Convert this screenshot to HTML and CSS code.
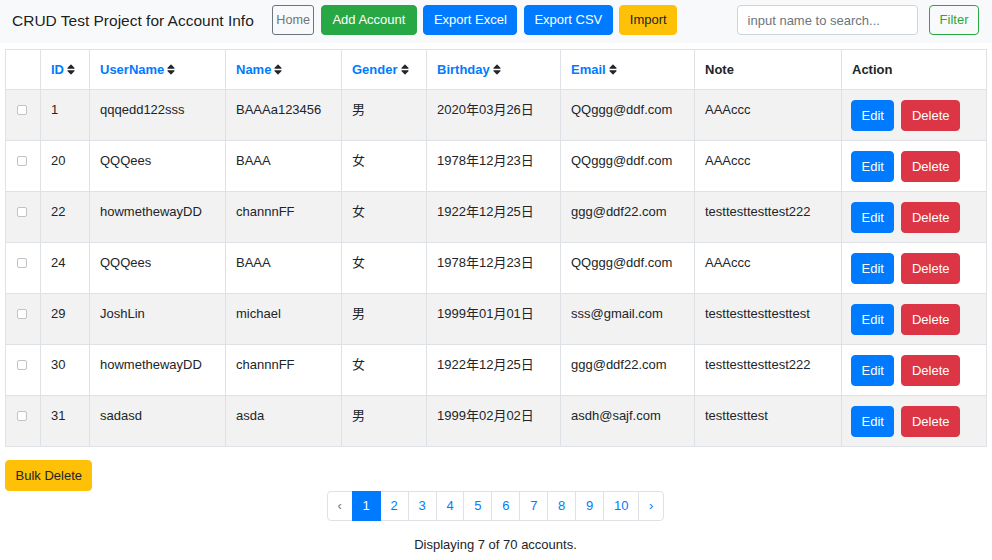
FILE: index.html
```html
<!DOCTYPE html>
<html lang="zh-Hant">
<head>
<meta charset="utf-8">
<title>CRUD Test Project for Account Info</title>
<link rel="stylesheet" href="styles.css">
</head>
<body>
<nav class="navbar">
  <span class="brand">CRUD Test Project for Account Info</span>
  <div class="nav-actions">
    <button class="btn btn-home">Home</button>
    <button class="btn btn-success btn-wide">Add Account</button>
    <button class="btn btn-primary">Export Excel</button>
    <button class="btn btn-primary">Export CSV</button>
    <button class="btn btn-warning">Import</button>
  </div>
  <form class="search">
    <input class="search-input" type="text" placeholder="input name to search...">
    <button class="btn btn-outline-success" type="button">Filter</button>
  </form>
</nav>

<main class="content">
  <table class="table">
    <colgroup>
      <col class="c-check"><col class="c-id"><col class="c-user"><col class="c-name"><col class="c-gender"><col class="c-birth"><col class="c-email"><col class="c-note"><col class="c-action">
    </colgroup>
    <thead>
      <tr>
        <th></th>
        <th><a class="sort-link">ID</a><svg class="sort" viewBox="0 0 320 512"><path d="M41 288h238c21.4 0 32.1 25.9 17 41L177 448c-9.4 9.4-24.6 9.4-33.9 0L24 329c-15.1-15.1-4.4-41 17-41zm255-105L177 64c-9.4-9.4-24.6-9.4-33.9 0L24 183c-15.1 15.1-4.4 41 17 41h238c21.4 0 32.1-25.9 17-41z"/></svg></th>
        <th><a class="sort-link">UserName</a><svg class="sort" viewBox="0 0 320 512"><path d="M41 288h238c21.4 0 32.1 25.9 17 41L177 448c-9.4 9.4-24.6 9.4-33.9 0L24 329c-15.1-15.1-4.4-41 17-41zm255-105L177 64c-9.4-9.4-24.6-9.4-33.9 0L24 183c-15.1 15.1-4.4 41 17 41h238c21.4 0 32.1-25.9 17-41z"/></svg></th>
        <th><a class="sort-link">Name</a><svg class="sort" viewBox="0 0 320 512"><path d="M41 288h238c21.4 0 32.1 25.9 17 41L177 448c-9.4 9.4-24.6 9.4-33.9 0L24 329c-15.1-15.1-4.4-41 17-41zm255-105L177 64c-9.4-9.4-24.6-9.4-33.9 0L24 183c-15.1 15.1-4.4 41 17 41h238c21.4 0 32.1-25.9 17-41z"/></svg></th>
        <th><a class="sort-link">Gender</a><svg class="sort" viewBox="0 0 320 512"><path d="M41 288h238c21.4 0 32.1 25.9 17 41L177 448c-9.4 9.4-24.6 9.4-33.9 0L24 329c-15.1-15.1-4.4-41 17-41zm255-105L177 64c-9.4-9.4-24.6-9.4-33.9 0L24 183c-15.1 15.1-4.4 41 17 41h238c21.4 0 32.1-25.9 17-41z"/></svg></th>
        <th><a class="sort-link">Birthday</a><svg class="sort" viewBox="0 0 320 512"><path d="M41 288h238c21.4 0 32.1 25.9 17 41L177 448c-9.4 9.4-24.6 9.4-33.9 0L24 329c-15.1-15.1-4.4-41 17-41zm255-105L177 64c-9.4-9.4-24.6-9.4-33.9 0L24 183c-15.1 15.1-4.4 41 17 41h238c21.4 0 32.1-25.9 17-41z"/></svg></th>
        <th><a class="sort-link">Email</a><svg class="sort" viewBox="0 0 320 512"><path d="M41 288h238c21.4 0 32.1 25.9 17 41L177 448c-9.4 9.4-24.6 9.4-33.9 0L24 329c-15.1-15.1-4.4-41 17-41zm255-105L177 64c-9.4-9.4-24.6-9.4-33.9 0L24 183c-15.1 15.1-4.4 41 17 41h238c21.4 0 32.1-25.9 17-41z"/></svg></th>
        <th>Note</th>
        <th>Action</th>
      </tr>
    </thead>
    <tbody>
      <tr>
        <td><input class="check" type="checkbox"></td>
        <td>1</td><td>qqqedd122sss</td><td>BAAAa123456</td><td>男</td><td>2020年03月26日</td><td>QQggg@ddf.com</td><td>AAAccc</td>
        <td><div class="actions"><button class="btn btn-primary btn-row">Edit</button><button class="btn btn-danger btn-row">Delete</button></div></td>
      </tr>
      <tr>
        <td><input class="check" type="checkbox"></td>
        <td>20</td><td>QQQees</td><td>BAAA</td><td>女</td><td>1978年12月23日</td><td>QQggg@ddf.com</td><td>AAAccc</td>
        <td><div class="actions"><button class="btn btn-primary btn-row">Edit</button><button class="btn btn-danger btn-row">Delete</button></div></td>
      </tr>
      <tr>
        <td><input class="check" type="checkbox"></td>
        <td>22</td><td>howmethewayDD</td><td>channnFF</td><td>女</td><td>1922年12月25日</td><td>ggg@ddf22.com</td><td>testtesttesttest222</td>
        <td><div class="actions"><button class="btn btn-primary btn-row">Edit</button><button class="btn btn-danger btn-row">Delete</button></div></td>
      </tr>
      <tr>
        <td><input class="check" type="checkbox"></td>
        <td>24</td><td>QQQees</td><td>BAAA</td><td>女</td><td>1978年12月23日</td><td>QQggg@ddf.com</td><td>AAAccc</td>
        <td><div class="actions"><button class="btn btn-primary btn-row">Edit</button><button class="btn btn-danger btn-row">Delete</button></div></td>
      </tr>
      <tr>
        <td><input class="check" type="checkbox"></td>
        <td>29</td><td>JoshLin</td><td>michael</td><td>男</td><td>1999年01月01日</td><td>sss@gmail.com</td><td>testtesttesttesttest</td>
        <td><div class="actions"><button class="btn btn-primary btn-row">Edit</button><button class="btn btn-danger btn-row">Delete</button></div></td>
      </tr>
      <tr>
        <td><input class="check" type="checkbox"></td>
        <td>30</td><td>howmethewayDD</td><td>channnFF</td><td>女</td><td>1922年12月25日</td><td>ggg@ddf22.com</td><td>testtesttesttest222</td>
        <td><div class="actions"><button class="btn btn-primary btn-row">Edit</button><button class="btn btn-danger btn-row">Delete</button></div></td>
      </tr>
      <tr>
        <td><input class="check" type="checkbox"></td>
        <td>31</td><td>sadasd</td><td>asda</td><td>男</td><td>1999年02月02日</td><td>asdh@sajf.com</td><td>testtesttest</td>
        <td><div class="actions"><button class="btn btn-primary btn-row">Edit</button><button class="btn btn-danger btn-row">Delete</button></div></td>
      </tr>
    </tbody>
  </table>

  <div class="bulk">
    <button class="btn btn-warning btn-row">Bulk Delete</button>
  </div>

  <ul class="pagination">
    <li class="page-item disabled"><span class="page-link">‹</span></li>
    <li class="page-item active"><span class="page-link">1</span></li>
    <li class="page-item"><span class="page-link">2</span></li>
    <li class="page-item"><span class="page-link">3</span></li>
    <li class="page-item"><span class="page-link">4</span></li>
    <li class="page-item"><span class="page-link">5</span></li>
    <li class="page-item"><span class="page-link">6</span></li>
    <li class="page-item"><span class="page-link">7</span></li>
    <li class="page-item"><span class="page-link">8</span></li>
    <li class="page-item"><span class="page-link">9</span></li>
    <li class="page-item"><span class="page-link">10</span></li>
    <li class="page-item"><span class="page-link">›</span></li>
  </ul>

  <p class="summary">Displaying 7 of 70 accounts.</p>
</main>
</body>
</html>
```

FILE: styles.css
```css
* { box-sizing: border-box; }

html, body {
  margin: 0;
  padding: 0;
  background: #fff;
}

body {
  font-family: "Liberation Sans", Arial, "Noto Sans CJK TC", sans-serif;
  font-size: 13px;
  line-height: 19.5px;
  color: #212529;
}

/* ---------- navbar ---------- */
.navbar {
  display: flex;
  align-items: center;
  height: 43px;
  padding: 0 13px 3px 12px;
  background: #f8f9fa;
}

.brand {
  font-size: 15.5px;
  line-height: 23px;
  color: rgba(0, 0, 0, 0.9);
  margin-right: 18px;
  white-space: nowrap;
}

.nav-actions {
  display: flex;
  align-items: center;
  gap: 6.5px;
}

.search {
  display: flex;
  align-items: center;
  gap: 11px;
  margin: 0 0 0 auto;
}

.search-input {
  width: 181px;
  height: 30px;
  padding: 0 9.5px;
  border: 1px solid #ced4da;
  border-radius: 4px;
  background: #fff;
  font-family: inherit;
  font-size: 13px;
  color: #495057;
}

.search-input::placeholder { color: #6c757d; }

/* ---------- buttons ---------- */
.btn {
  display: inline-block;
  font-family: inherit;
  font-size: 13px;
  line-height: 18px;
  padding: 5px 9.5px;
  border: 1px solid transparent;
  border-radius: 4px;
  cursor: pointer;
  white-space: nowrap;
  color: #fff;
  background: transparent;
}

.btn-wide {
  padding-left: 10.5px;
  padding-right: 10.5px;
}

.btn-row {
  line-height: 19px;
}

.btn-home {
  font-size: 12.6px;
  padding: 5px 3.5px;
  color: #6c757d;
  border-color: #6c757d;
  border-radius: 3px;
}

.btn-success { background: #28a745; border-color: #28a745; }
.btn-primary { background: #007bff; border-color: #007bff; }
.btn-danger { background: #dc3545; border-color: #dc3545; }
.btn-warning { background: #ffc107; border-color: #ffc107; color: #212529; }
.btn-outline-success { color: #28a745; border-color: #28a745; background: transparent; }

/* ---------- table ---------- */
.content {
  padding: 0 6px 0 5px;
}

.table {
  width: 981px;
  margin-top: 6px;
  border-collapse: collapse;
  table-layout: fixed;
}

.c-check { width: 35px; }
.c-id { width: 49px; }
.c-user { width: 136px; }
.c-name { width: 116px; }
.c-gender { width: 85px; }
.c-birth { width: 134px; }
.c-email { width: 134px; }
.c-note { width: 147px; }
.c-action { width: 145px; }

.table th,
.table td {
  border: 1px solid #dee2e6;
  padding: 10px 10px 9.5px;
  text-align: left;
  vertical-align: top;
  white-space: nowrap;
}

.table th {
  font-weight: bold;
  color: #212529;
}

.sort-link {
  color: #007bff;
  cursor: pointer;
}

.sort {
  width: 8px;
  height: 13px;
  margin-left: 3px;
  vertical-align: -2px;
  fill: #212529;
}

.table tbody tr:nth-child(odd) td {
  background: #f2f2f2;
}

.check {
  appearance: none;
  -webkit-appearance: none;
  display: block;
  width: 10px;
  height: 10px;
  margin: 5px 0 0 1px;
  border: 1px solid #c2c2c2;
  border-radius: 2px;
  background: #fff;
}

.actions {
  display: flex;
  gap: 7px;
  margin-top: -0.5px;
  margin-left: -1px;
}

/* ---------- footer ---------- */
.bulk {
  margin-top: 12.5px;
}

.pagination {
  display: flex;
  justify-content: center;
  list-style: none;
  margin: 0;
  padding: 0;
}

.page-link {
  display: block;
  padding: 5px 9.85px;
  line-height: 18px;
  margin-left: -1px;
  border: 1px solid #dee2e6;
  background: #fff;
  color: #007bff;
}

.page-item:first-child .page-link {
  margin-left: 0;
  border-radius: 4px 0 0 4px;
}

.page-item:last-child .page-link {
  border-radius: 0 4px 4px 0;
}

.page-item.active .page-link {
  position: relative;
  background: #007bff;
  border-color: #007bff;
  color: #fff;
}

.page-item.disabled .page-link {
  color: #6c757d;
}

.summary {
  margin: 14px 0 0;
  text-align: center;
}
```
